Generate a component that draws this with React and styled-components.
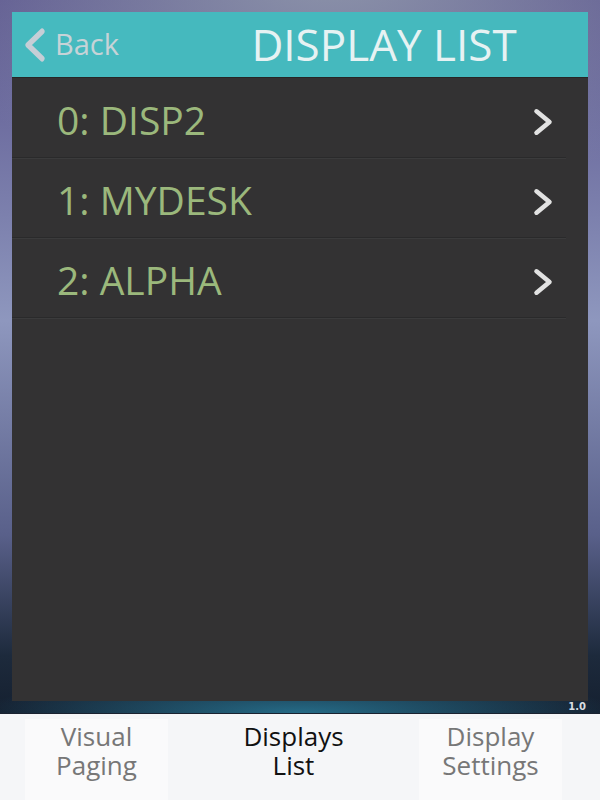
import styled, { createGlobalStyle } from "styled-components";

const GlobalStyle = createGlobalStyle`
  html, body {
    margin: 0;
    padding: 0;
    width: 600px;
    height: 800px;
    overflow: hidden;
  }
  body {
    font-family: "Open Sans", "Noto Sans", sans-serif;
  }
`;

const displays = [
  { id: 0, name: "DISP2" },
  { id: 1, name: "MYDESK" },
  { id: 2, name: "ALPHA" },
];

const tabs = [
  { top: "Visual", bottom: "Paging", active: false, tile: true },
  { top: "Displays", bottom: "List", active: true, tile: false },
  { top: "Display", bottom: "Settings", active: false, tile: true },
];

function Chevron({ dir = "right", color, w = 24, h = 28, stroke = 4.4 }) {
  const d = dir === "right" ? "M6 4 L18 14 L6 24" : "M18 4 L6 14 L18 24";
  return (
    <svg width={w} height={h} viewBox="0 0 24 28" preserveAspectRatio="none">
      <path d={d} fill="none" stroke={color} strokeWidth={stroke} strokeLinecap="round" strokeLinejoin="round" />
    </svg>
  );
}

export default function App() {
  return (
    <>
      <GlobalStyle />
      <Screen>
        <Stage>
          <Panel>
            <Header>
              <BackButton>
                <Chevron dir="left" color="#c6ced6" w={28} h={38} stroke={4.4} />
                <BackLabel>Back</BackLabel>
              </BackButton>
              <Title>DISPLAY LIST</Title>
            </Header>
            <List>
              {displays.map((d) => (
                <Row key={d.id}>
                  <RowLabel>
                    {d.id}: {d.name}
                  </RowLabel>
                  <Chevron color="#e2e2e2" w={26} h={30} stroke={4.2} />
                </Row>
              ))}
            </List>
          </Panel>
          <Version>1.0</Version>
        </Stage>
        <TabBar>
          {tabs.map((t) => (
            <Tab key={t.top} $tile={t.tile} $active={t.active}>
              <span>{t.top}</span>
              <span>{t.bottom}</span>
            </Tab>
          ))}
        </TabBar>
      </Screen>
    </>
  );
}

const Screen = styled.div`
  width: 600px;
  height: 800px;
  display: flex;
  flex-direction: column;
`;

const Stage = styled.div`
  flex: 1;
  display: flex;
  flex-direction: column;
  padding: 12px 12px 0 12px;
  background:
    radial-gradient(ellipse 320px 40px at 300px 713px, rgba(40, 120, 150, 0.85), rgba(40, 120, 150, 0) 100%),
    radial-gradient(ellipse 420px 260px at 330px -40px, #8f97ab 0%, rgba(143, 151, 171, 0) 100%),
    linear-gradient(180deg, #5d5790 0%, #7c80ad 30%, #8e97be 45%, #59608a 75%, #1d2a3c 92%, #152030 100%);
`;

const Panel = styled.div`
  flex: 1;
  display: flex;
  flex-direction: column;
  background: #333233;
`;

const Header = styled.div`
  height: 66px;
  display: flex;
  align-items: center;
  background: #45b9be;
  border-bottom: 1px solid #262626;
  box-sizing: border-box;
`;

const BackButton = styled.div`
  width: 138px;
  height: 100%;
  display: flex;
  align-items: center;
  gap: 6px;
  padding-left: 9px;
  box-sizing: border-box;
  background: #46babf;
`;

const BackLabel = styled.span`
  font-size: 29px;
  color: #c7d3d7;
  padding-bottom: 2px;
`;

const Title = styled.div`
  flex: 1;
  text-align: center;
  font-size: 44px;
  color: #e6f2f3;
  padding-left: 30px;
  padding-bottom: 2px;
  white-space: nowrap;
`;

const List = styled.div`
  display: flex;
  flex-direction: column;
  padding-right: 22px;
`;

const Row = styled.div`
  height: 80px;
  display: flex;
  align-items: center;
  justify-content: space-between;
  padding: 8px 10px 0 45px;
  box-sizing: border-box;
  border-bottom: 1px solid #2a2a2b;
  box-shadow: 0 1px 0 #3b3b3c;
`;

const RowLabel = styled.span`
  font-size: 39px;
  color: #9bb87c;
  padding-bottom: 4px;
`;

const Version = styled.div`
  height: 12px;
  font-size: 10px;
  line-height: 12px;
  text-align: right;
  color: #d8dde2;
  padding-right: 2px;
  font-family: "DejaVu Sans", sans-serif;
  font-weight: bold;
`;

const TabBar = styled.div`
  height: 87px;
  display: grid;
  grid-template-columns: 143px 1fr 143px;
  column-gap: 40px;
  padding: 5px 38px 0 25px;
  box-sizing: border-box;
  background: #f5f6f8;
  border-top: 1px solid #1a2230;
`;

const Tab = styled.div`
  display: flex;
  flex-direction: column;
  align-items: center;
  padding-top: 3px;
  font-size: 26px;
  line-height: 29px;
  color: ${(p) => (p.$active ? "#111111" : "#777777")};
  background: ${(p) => (p.$tile ? "#fafafb" : "transparent")};
`;
